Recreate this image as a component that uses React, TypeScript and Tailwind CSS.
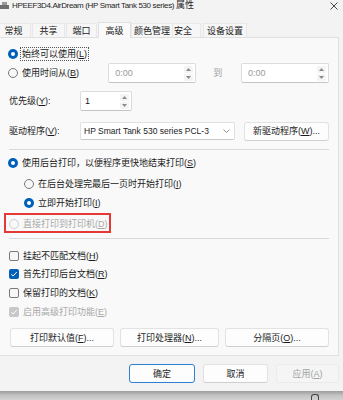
import { ReactNode } from "react";

const Radio = ({ checked, disabled }: { checked?: boolean; disabled?: boolean }) =>
  checked ? (
    <span className="flex items-center justify-center w-[10px] h-[10px] rounded-full bg-[#005fb8] shrink-0">
      <span className="w-[4px] h-[4px] rounded-full bg-white" />
    </span>
  ) : (
    <span
      className={
        disabled
          ? "w-[10px] h-[10px] rounded-full border border-[#cfcfcf] bg-[#f9f9f9] shrink-0"
          : "w-[10px] h-[10px] rounded-full border border-[#7a7a7a] bg-[#f7f7f7] shrink-0"
      }
    />
  );

const Check = ({ checked, disabled }: { checked?: boolean; disabled?: boolean }) =>
  checked ? (
    <span
      className={
        disabled
          ? "flex items-center justify-center w-[10px] h-[10px] rounded-[2px] bg-[#c8c8c8] shrink-0"
          : "flex items-center justify-center w-[10px] h-[10px] rounded-[2px] bg-[#005fb8] shrink-0"
      }
    >
      <svg width="8" height="8" viewBox="0 0 8 8">
        <path d="M1.3 4.2 L3.1 6 L6.8 2" fill="none" stroke="white" strokeWidth="1" />
      </svg>
    </span>
  ) : (
    <span className="w-[10px] h-[10px] rounded-[2px] border border-[#7a7a7a] bg-[#f7f7f7] shrink-0" />
  );

const Arrows = () => (
  <div className="flex flex-col gap-[1px] w-[9px] mr-[2px]">
    <div className="flex items-center justify-center h-[7px] bg-[#f4f4f4] rounded-[1px]">
      <svg width="5" height="3" viewBox="0 0 5 3">
        <path d="M0 3 L2.5 0 L5 3 Z" fill="#8a8a8a" />
      </svg>
    </div>
    <div className="flex items-center justify-center h-[7px] bg-[#f4f4f4] rounded-[1px]">
      <svg width="5" height="3" viewBox="0 0 5 3">
        <path d="M0 0 L2.5 3 L5 0 Z" fill="#8a8a8a" />
      </svg>
    </div>
  </div>
);

const Spin = ({ value, w, muted }: { value: string; w: string; muted?: boolean }) => (
  <div
    className={`flex items-center h-[20px] ${w} bg-white border border-[#dcdcdc] border-b-[#c4c4c4] rounded-[2px] shrink-0`}
  >
    <span className={muted ? "flex-1 pl-[6px] text-[#9a9a9a]" : "flex-1 pl-[4px] text-[#1b1b1b]"}>{value}</span>
    <Arrows />
  </div>
);

const Btn = ({ children, w, primary, disabled }: { children: ReactNode; w: string; primary?: boolean; disabled?: boolean }) => (
  <div
    className={`flex items-center justify-center h-[19px] ${w} rounded-[3px] border shrink-0 ${
      primary
        ? "border-[#2c7fd1] bg-[#fdfdfd] text-[#1b1b1b]"
        : disabled
        ? "border-[#ebebeb] bg-[#f5f5f5] text-[#a3a3a3]"
        : "border-[#e2e2e2] border-b-[#cfcfcf] bg-[#fdfdfd] text-[#1b1b1b]"
    }`}
  >
    {children}
  </div>
);

const Row = ({ children, cls }: { children: ReactNode; cls: string }) => (
  <div className={`flex items-center ${cls}`}>{children}</div>
);

const tabs = [
  { label: "常规", cls: "ml-[-4px] w-[35px]" },
  { label: "共享", cls: "ml-[1px] w-[33px]" },
  { label: "端口", cls: "ml-[1px] w-[31px]" },
];

export default function App() {
  return (
    <div className="w-[343px] h-[400px] overflow-hidden bg-[#f3f3f3] text-[9px] leading-[12px] text-[#1b1b1b] font-['Liberation_Sans','Noto_Sans_CJK_SC',sans-serif] flex flex-col">
      {/* title bar */}
      <div className="flex items-center h-[11px] shrink-0">
        <svg width="9" height="8" viewBox="0 0 9 8">
          <rect x="2" y="0" width="5" height="3" fill="#9a9a9a" />
          <rect x="0" y="3" width="9" height="4" fill="#6f6f6f" />
        </svg>
        <span className="ml-[3px] text-[8px] tracking-[-0.35px] text-[#1f1f1f] whitespace-nowrap">
          HPEEF3D4.AirDream (HP Smart Tank 530 series) <span className="text-[9px] tracking-normal">属性</span>
        </span>
        <svg width="8" height="8" viewBox="0 0 8 8" className="ml-auto mr-[5px]">
          <path d="M0.5 0.5 L7.5 7.5 M7.5 0.5 L0.5 7.5" stroke="#333" strokeWidth="0.9" />
        </svg>
      </div>

      {/* tabs */}
      <div className="flex items-end h-[26px] shrink-0">
        {tabs.map((t) => (
          <div
            key={t.label}
            className={`flex items-center justify-center h-[14px] bg-[#f6f6f6] border-t border-x border-[#e8e8e8] ${t.cls}`}
          >
            {t.label}
          </div>
        ))}
        <div className="flex items-center justify-center h-[16px] w-[33px] ml-[1px] bg-[#fafafa] border-t border-x border-[#e0e0e0] relative top-[1px] z-10">
          高级
        </div>
        <div className="flex items-center justify-center h-[14px] w-[42px] bg-[#f6f6f6] border-t border-x border-[#e8e8e8]">
          颜色管理
        </div>
        <div className="flex items-center justify-start pl-[1px] h-[14px] w-[28px] bg-[#f6f6f6] border-t border-r border-[#e8e8e8]">
          安全
        </div>
        <div className="flex items-center justify-center h-[14px] w-[44px] ml-[2px] bg-[#f6f6f6] border-t border-x border-[#e8e8e8]">
          设备设置
        </div>
      </div>

      {/* panel */}
      <div className="w-[339px] h-[319px] shrink-0 bg-[#f9f9f9] border border-[#e0e0e0] border-l-0 flex flex-col pl-[8px] pr-[9px]">
        <Row cls="h-[14px] mt-[9px]">
          <Radio checked />
          <span className="ml-[3px] px-[1px] outline-1 outline-dotted outline-[#555]">始终可以使用(<u>L</u>)</span>
        </Row>
        <Row cls="h-[20px] mt-[2px]">
          <Radio />
          <span className="ml-[4px] w-[87px]">使用时间从(<u>B</u>)</span>
          <Spin value="0:00" w="w-[88px]" muted />
          <span className="ml-[17px] w-[28px] text-[#a0a0a0]">到</span>
          <Spin value="0:00" w="w-[88px]" muted />
        </Row>
        <Row cls="h-[20px] mt-[8px]">
          <span className="ml-[1px] w-[71px]">优先级(<u>Y</u>):</span>
          <Spin value="1" w="w-[52px]" />
        </Row>
        <Row cls="h-[20px] mt-[10px]">
          <span className="ml-[1px] w-[71px]">驱动程序(<u>V</u>):</span>
          <div className="flex items-center h-[18px] w-[155px] bg-white border border-[#e0e0e0] border-b-[#c9c9c9] rounded-[2px] shrink-0">
            <span className="flex-1 pl-[3px] text-[8.5px] whitespace-nowrap">HP Smart Tank 530 series PCL-3</span>
            <svg width="7" height="4" viewBox="0 0 7 4" className="mr-[4px]">
              <path d="M0.5 0.5 L3.5 3.5 L6.5 0.5" fill="none" stroke="#777" strokeWidth="0.8" />
            </svg>
          </div>
          <div className="ml-[9px]">
            <Btn w="w-[85px]">新驱动程序(<u>W</u>)...</Btn>
          </div>
        </Row>
        <div className="h-[1px] mt-[8px] ml-[1px] bg-[#d9d9d9]" />
        <Row cls="h-[14px] mt-[6px]">
          <Radio checked />
          <span className="ml-[4px]">使用后台打印，以便程序更快地结束打印(<u>S</u>)</span>
        </Row>
        <Row cls="h-[14px] mt-[7px] pl-[16px]">
          <Radio />
          <span className="ml-[4px]">在后台处理完最后一页时开始打印(<u>I</u>)</span>
        </Row>
        <Row cls="h-[14px] mt-[5px] pl-[16px]">
          <Radio checked />
          <span className="ml-[4px]">立即开始打印(<u>I</u>)</span>
        </Row>
        <div className="flex items-center h-[20px] w-[107px] mt-[3px] ml-[-4px] pl-[3px] pt-[2px] border-2 border-[#e53935]">
          <Radio disabled />
          <span className="ml-[4px] text-[#a8a8a8]">直接打印到打印机(<u>D</u>)</span>
        </div>
        <div className="h-[1px] mt-[5px] ml-[1px] bg-[#d9d9d9]" />
        <Row cls="h-[14px] mt-[10px] pl-[1px]">
          <Check />
          <span className="ml-[4px]">挂起不匹配文档(<u>H</u>)</span>
        </Row>
        <Row cls="h-[14px] mt-[4px] pl-[1px]">
          <Check checked />
          <span className="ml-[4px]">首先打印后台文档(<u>R</u>)</span>
        </Row>
        <Row cls="h-[14px] mt-[5px] pl-[1px]">
          <Check />
          <span className="ml-[4px]">保留打印的文档(<u>K</u>)</span>
        </Row>
        <Row cls="h-[14px] mt-[5px] pl-[1px]">
          <Check checked disabled />
          <span className="ml-[4px] text-[#a8a8a8]">启用高级打印功能(<u>E</u>)</span>
        </Row>
        <Row cls="mt-[9px] pl-[2px] gap-[6px]">
          <Btn w="w-[104px]">打印默认值(<u>F</u>)...</Btn>
          <Btn w="w-[99px]">打印处理器(<u>N</u>)...</Btn>
          <Btn w="w-[104px]">分隔页(<u>O</u>)...</Btn>
        </Row>
      </div>

      {/* dialog buttons */}
      <div className="flex items-center h-[35px] shrink-0 pl-[129px] gap-[8px]">
        <Btn w="w-[66px]" primary>确定</Btn>
        <Btn w="w-[65px]">取消</Btn>
        <Btn w="w-[63px]" disabled>应用(<u>A</u>)</Btn>
      </div>

      {/* window edge */}
      <div className="flex-1 bg-gradient-to-b from-[#9c9c9c] via-[#c4c4c4] to-[#d2d2d2] flex items-end">
        <div className="ml-[311px] w-[8px] h-[6px] border border-b-0 border-[#444] rounded-t-[3px]" />
      </div>
    </div>
  );
}
